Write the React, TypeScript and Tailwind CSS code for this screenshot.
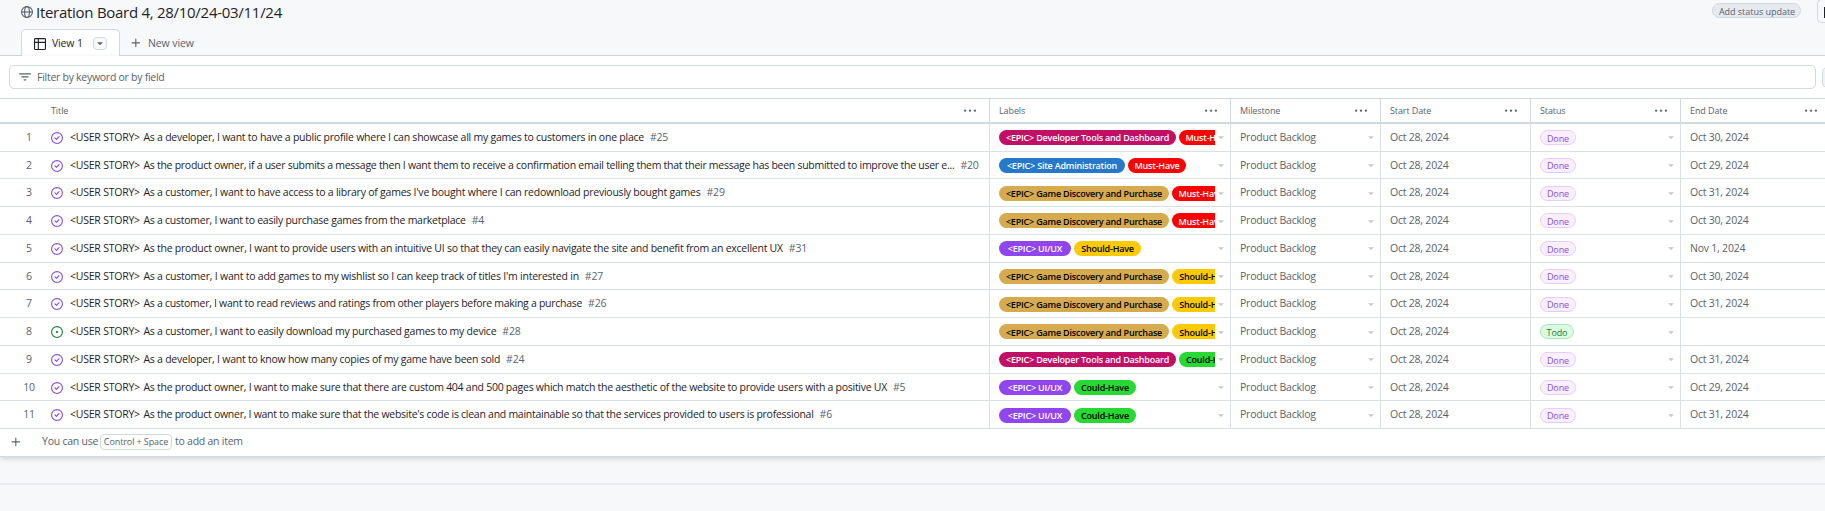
import React from "react";

const ICONS = {
  closed:
    "M11.28 6.78a.75.75 0 0 0-1.06-1.06L7.25 8.69 5.78 7.22a.75.75 0 0 0-1.06 1.06l2 2a.75.75 0 0 0 1.06 0l3.5-3.5ZM16 8A8 8 0 1 1 0 8a8 8 0 0 1 16 0Zm-1.5 0a6.5 6.5 0 1 0-13 0 6.5 6.5 0 0 0 13 0Z",
  open: "M8 9.5a1.5 1.5 0 1 0 0-3 1.5 1.5 0 0 0 0 3ZM8 0a8 8 0 1 1 0 16A8 8 0 0 1 8 0ZM1.5 8a6.5 6.5 0 1 0 13 0 6.5 6.5 0 0 0-13 0Z",
  table:
    "M0 1.75C0 .784.784 0 1.75 0h12.5C15.216 0 16 .784 16 1.75v12.5A1.75 1.75 0 0 1 14.25 16H1.75A1.75 1.75 0 0 1 0 14.25ZM6.5 6.5v8h7.75a.25.25 0 0 0 .25-.25V6.5Zm8-1.5V1.75a.25.25 0 0 0-.25-.25H6.5V5Zm-13 1.5v7.75c0 .138.112.25.25.25H5v-8ZM5 5V1.5H1.75a.25.25 0 0 0-.25.25V5Z",
  filter:
    "M.75 3h14.5a.75.75 0 0 1 0 1.5H.75a.75.75 0 0 1 0-1.5ZM3 7.75A.75.75 0 0 1 3.75 7h8.5a.75.75 0 0 1 0 1.5h-8.5A.75.75 0 0 1 3 7.75Zm3 4a.75.75 0 0 1 .75-.75h2.5a.75.75 0 0 1 0 1.5h-2.5a.75.75 0 0 1-.75-.75Z",
  plus: "M7.75 2a.75.75 0 0 1 .75.75V7h4.25a.75.75 0 0 1 0 1.5H8.5v4.25a.75.75 0 0 1-1.5 0V8.5H2.75a.75.75 0 0 1 0-1.5H7V2.75A.75.75 0 0 1 7.75 2Z",
  kebab:
    "M8 9a1.5 1.5 0 1 0 0-3 1.5 1.5 0 0 0 0 3ZM1.5 9a1.5 1.5 0 1 0 0-3 1.5 1.5 0 0 0 0 3Zm13 0a1.5 1.5 0 1 0 0-3 1.5 1.5 0 0 0 0 3Z",
  caret:
    "m4.427 7.427 3.396 3.396a.25.25 0 0 0 .354 0l3.396-3.396A.25.25 0 0 0 11.396 7H4.604a.25.25 0 0 0-.177.427Z",
};

function Icon({ name, className = "" }: { name: keyof typeof ICONS; className?: string }) {
  return (
    <svg viewBox="0 0 16 16" className={`size-3 shrink-0 fill-current ${className}`}>
      <path d={ICONS[name]} />
    </svg>
  );
}

function Globe() {
  return (
    <svg viewBox="0 0 16 16" className="size-3 shrink-0 fill-none stroke-[#59636e]" strokeWidth="1.5">
      <circle cx="8" cy="8" r="7.25" />
      <ellipse cx="8" cy="8" rx="3.2" ry="7.25" />
      <path d="M1 8h14" />
    </svg>
  );
}

const LABELS = {
  dev: { text: "<EPIC> Developer Tools and Dashboard", cls: "w-[177px] bg-[#c10f66] text-white" },
  site: { text: "<EPIC> Site Administration", cls: "w-[126px] bg-[#2679c9] text-white" },
  game: { text: "<EPIC> Game Discovery and Purchase", cls: "w-[170px] bg-[#d6ab4f] text-black" },
  ui: { text: "<EPIC> UI/UX", cls: "w-[72px] bg-[#8f46ee] text-white" },
  must: { text: "Must-Have", cls: "w-[58px] bg-[#ff0000] text-white" },
  should: { text: "Should-Have", cls: "w-[67px] bg-[#fbca04] text-black" },
  could: { text: "Could-Have", cls: "w-[62px] bg-[#27d932] text-black" },
};

type Label = keyof typeof LABELS;
type Row = { title: string; id: number; labels: Label[]; end: string; todo?: boolean; track: string };

const ROWS: Row[] = [
  { title: "As a developer, I want to have a public profile where I can showcase all my games to customers in one place", id: 25, labels: ["dev", "must"], end: "Oct 30, 2024", track: "tracking-[-0.24px]" },
  { title: "As the product owner, if a user submits a message then I want them to receive a confirmation email telling them that their message has been submitted to improve the user e...", id: 20, labels: ["site", "must"], end: "Oct 29, 2024", track: "tracking-[-0.27px]" },
  { title: "As a customer, I want to have access to a library of games I've bought where I can redownload previously bought games", id: 29, labels: ["game", "must"], end: "Oct 31, 2024", track: "tracking-[-0.23px]" },
  { title: "As a customer, I want to easily purchase games from the marketplace", id: 4, labels: ["game", "must"], end: "Oct 30, 2024", track: "tracking-[-0.255px]" },
  { title: "As the product owner, I want to provide users with an intuitive UI so that they can easily navigate the site and benefit from an excellent UX", id: 31, labels: ["ui", "should"], end: "Nov 1, 2024", track: "tracking-[-0.245px]" },
  { title: "As a customer, I want to add games to my wishlist so I can keep track of titles I'm interested in", id: 27, labels: ["game", "should"], end: "Oct 30, 2024", track: "tracking-[-0.23px]" },
  { title: "As a customer, I want to read reviews and ratings from other players before making a purchase", id: 26, labels: ["game", "should"], end: "Oct 31, 2024", track: "tracking-[-0.28px]" },
  { title: "As a customer, I want to easily download my purchased games to my device", id: 28, labels: ["game", "should"], end: "", todo: true, track: "tracking-[-0.24px]" },
  { title: "As a developer, I want to know how many copies of my game have been sold", id: 24, labels: ["dev", "could"], end: "Oct 31, 2024", track: "tracking-[-0.235px]" },
  { title: "As the product owner, I want to make sure that there are custom 404 and 500 pages which match the aesthetic of the website to provide users with a positive UX", id: 5, labels: ["ui", "could"], end: "Oct 29, 2024", track: "tracking-[-0.265px]" },
  { title: "As the product owner, I want to make sure that the website's code is clean and maintainable so that the services provided to users is professional", id: 6, labels: ["ui", "could"], end: "Oct 31, 2024", track: "tracking-[-0.27px]" },
];

const GRID = "grid w-[1831px] grid-cols-[990px_241px_150px_150px_150px_150px]";

function HeadCell({ children, first }: { children: string; first?: boolean }) {
  return (
    <div
      className={`flex items-center justify-between border-r border-[#d1d9e0] pr-[13px] text-[9px] font-medium tracking-[-0.1px] text-[#59636e] ${first ? "pl-[51px]" : "pl-[9px]"}`}
    >
      <span className="pt-px">{children}</span>
      <Icon name="kebab" className="mt-px" />
    </div>
  );
}

function Cell({ children, caret }: { children?: React.ReactNode; caret?: boolean }) {
  return (
    <div className="flex min-w-0 items-start justify-between border-r border-b border-[#dbe0e6] pl-[9px] text-[#59636e]">
      <div className="min-w-0 pt-[6px] leading-[15px]">{children}</div>
      {caret && <Icon name="caret" className="mt-[7.5px] mr-[3px] text-[#c4c9cf]" />}
    </div>
  );
}

function TableRow({ row, n }: { row: Row; n: number }) {
  return (
    <div className={`${GRID} h-[27.75px] text-[10.5px] tracking-[-0.22px]`}>
      <div className="flex items-start border-r border-b border-[#dbe0e6] pt-[6px] leading-[15px] whitespace-nowrap">
        <span className="w-[58px] shrink-0 text-center text-[#59636e]">{n}</span>
        <Icon name={row.todo ? "open" : "closed"} className={`mt-[2px] -ml-[7px] ${row.todo ? "text-[#1a7f37]" : "text-[#8250df]"}`} />
        <span className="ml-[7px] text-[#1f2328]">
          <span className="mr-px">&lt;USER STORY&gt;</span> <span className={row.track}>{row.title}</span>
        </span>
        <span className="ml-[6px] text-[#59636e]">#{row.id}</span>
      </div>
      <div className="flex min-w-0 items-start border-r border-b border-[#dbe0e6] pl-[9px]">
        <div className="flex w-[216px] gap-[3px] overflow-hidden pt-[6.375px]">
          {row.labels.map((l) => (
            <span
              key={l}
              className={`flex h-[15px] shrink-0 items-center justify-center rounded-full pt-px text-[9px] font-semibold tracking-[-0.2px] whitespace-nowrap ${LABELS[l].cls}`}
            >
              {LABELS[l].text}
            </span>
          ))}
        </div>
        <Icon name="caret" className="mt-[7.5px] text-[#c4c9cf]" />
      </div>
      <Cell caret>Product Backlog</Cell>
      <Cell>Oct 28, 2024</Cell>
      <Cell caret>
        <span
          className={`mt-[0.375px] flex h-[15px] items-center justify-center rounded-full border pt-px text-[9px] font-medium tracking-[-0.1px] ${
            row.todo ? "w-[34px] border-[#a6e7b4] bg-[#dafbe1] text-[#1a7f37]" : "w-[36px] border-[#e6cbff] bg-[#fbefff] text-[#8250df]"
          }`}
        >
          {row.todo ? "Todo" : "Done"}
        </span>
      </Cell>
      <Cell>{row.end}</Cell>
    </div>
  );
}

export default function App() {
  return (
    <div className="flex h-[511px] w-full flex-col overflow-hidden bg-[#f6f8fa] font-['Open_Sans',sans-serif] text-[10.5px] text-[#1f2328]">
      <header className="flex h-[29px] shrink-0 items-start justify-between pl-[21px]">
        <h1 className="flex items-center gap-[3px] text-[15px] leading-[24px] font-medium tracking-[-0.28px] whitespace-nowrap">
          <Globe />
          Iteration Board 4, 28/10/24-03/11/24
        </h1>
        <div className="flex items-start">
          <span className="mt-[3px] mr-4 flex h-[15px] w-[89px] items-center justify-center rounded-full border border-[#d1d9e0] bg-[#e6eaef] pt-[2px] pl-px text-[9px] font-medium tracking-[-0.03px] text-[#59636e]">
            Add status update
          </span>
          <span className="-mt-px flex h-6 w-2 items-center rounded-l-[5px] border border-r-0 border-[#d1d9e0] pl-[6px]">
            <span className="mt-[2px] h-[11px] w-px bg-[#1f2328]" />
          </span>
        </div>
      </header>
      <nav className="flex h-[27px] shrink-0">
        <div className="w-[21px] border-b border-[#d1d9e0]" />
        <div className="flex w-[99px] items-center rounded-t-[5px] border border-b-0 border-[#d1d9e0] bg-white pl-3">
          <Icon name="table" className="mt-[2px]" />
          <span className="mt-[2px] ml-[6px] tracking-[-0.15px]">View 1</span>
          <span className="mr-[12px] ml-auto flex h-[13px] w-[14px] items-center justify-center rounded-[4px] border border-[#d1d9e0] bg-[#f6f8fa] text-[#59636e]">
            <Icon name="caret" />
          </span>
        </div>
        <div className="flex flex-1 items-center border-b border-[#d1d9e0] pl-[10px] text-[#59636e]">
          <Icon name="plus" className="mt-px" />
          <span className="mt-[3px] ml-[6px] tracking-[-0.1px]">New view</span>
        </div>
      </nav>
      <main className="flex h-[401px] shrink-0 flex-col border-b border-[#d1d9e0] bg-white shadow-[0_2px_5px_rgba(31,35,40,0.16)]">
        <div className="flex h-[42px] shrink-0 items-start pt-[9px] pl-[9px]">
          <div className="flex h-6 w-[1807px] shrink-0 items-center rounded-[5px] border border-[#d1d9e0] pl-[9px] text-[#59636e]">
            <Icon name="filter" />
            <span className="mt-px ml-[6px] tracking-[-0.27px]">Filter by keyword or by field</span>
          </div>
          <div className="mt-[2px] ml-[6px] h-[21px] w-4 shrink-0 rounded-[5px] border border-[#d5dbe1] bg-[#f0f3f6]" />
        </div>
        <div className={`${GRID} h-[25.75px] shrink-0 border-t border-b-2 border-[#d1d9e0]`}>
          <HeadCell first>Title</HeadCell>
          <HeadCell>Labels</HeadCell>
          <HeadCell>Milestone</HeadCell>
          <HeadCell>Start Date</HeadCell>
          <HeadCell>Status</HeadCell>
          <HeadCell>End Date</HeadCell>
        </div>
        {ROWS.map((row, i) => (
          <TableRow key={row.id} row={row} n={i + 1} />
        ))}
        <div className="flex flex-1 items-center pb-px tracking-[-0.24px] text-[#59636e]">
          <Icon name="plus" className="ml-[10px]" />
          <span className="ml-5 w-[55px] whitespace-nowrap">You can use</span>
          <kbd className="mr-[3px] ml-[3px] flex h-4 w-[72px] items-center justify-center rounded-[4px] border border-[#d1d9e0] font-['Open_Sans',sans-serif] text-[9px] tracking-[-0.1px]">
            Control + Space
          </kbd>
          <span>to add an item</span>
        </div>
      </main>
      <div className="mt-[26px] h-[2px] shrink-0 bg-[#e8eff0]" />
    </div>
  );
}
